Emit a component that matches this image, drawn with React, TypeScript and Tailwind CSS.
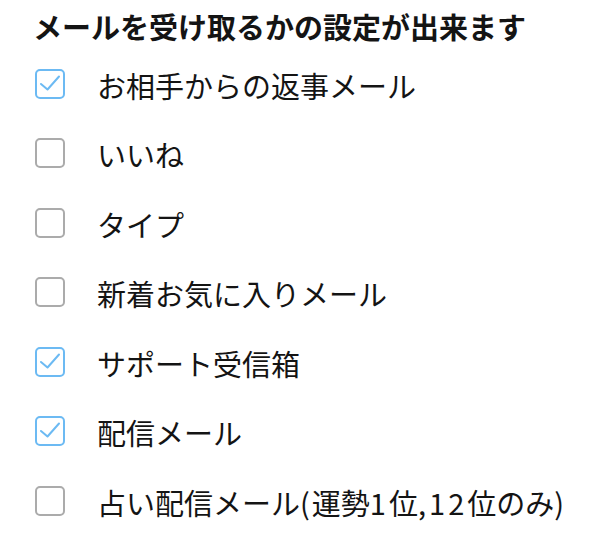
import React from "react";

const items: { label: React.ReactNode; key: string; checked: boolean }[] = [
  { key: "a", label: "お相手からの返事メール", checked: true },
  { key: "b", label: "いいね", checked: false },
  { key: "c", label: "タイプ", checked: false },
  { key: "d", label: "新着お気に入りメール", checked: false },
  { key: "e", label: "サポート受信箱", checked: true },
  { key: "f", label: "配信メール", checked: true },
  {
    key: "g",
    label: (
      <>
        占い配信メール<span className="tracking-[2px]">(</span>運勢
        <span className="tracking-[3px]">1</span>位<span className="tracking-[3px]">,12</span>位のみ
        <span className="tracking-[2px]">)</span>
      </>
    ),
    checked: false,
  },
];

function Box({ checked }: { checked: boolean }) {
  return (
    <div
      className={
        checked
          ? "w-[30px] h-[30px] rounded-[5px] border-2 border-[#6cbaf3] bg-white flex items-center justify-center shrink-0"
          : "w-[30px] h-[30px] rounded-[5px] border-2 border-[#ababab] bg-white shrink-0"
      }
    >
      {checked && (
        <svg width="26" height="26" viewBox="0 0 26 26" fill="none">
          <path
            d="M4 13 L10.5 18.5 L22 5.5"
            stroke="#6cbaf3"
            strokeWidth="2"
            strokeLinecap="round"
            strokeLinejoin="round"
          />
        </svg>
      )}
    </div>
  );
}

export default function App() {
  return (
    <div
      className="w-[600px] h-[538px] bg-white text-[#141414] pl-[33px]"
      style={{ fontFamily: '"Noto Sans CJK JP", "Noto Sans", sans-serif' }}
    >
      <div className="h-[49px] flex items-center pt-[4px]">
        <h1 className="text-[29px] font-bold leading-none">
          メールを受け取るかの設定が出来ます
        </h1>
      </div>
      <div className="flex flex-col">
        {items.map((it) => (
          <div key={it.key} className="h-[69.5px] flex items-center pl-[2px]">
            <Box checked={it.checked} />
            <span className="ml-[32px] text-[29px] leading-none pt-[3px]">{it.label}</span>
          </div>
        ))}
      </div>
    </div>
  );
}
